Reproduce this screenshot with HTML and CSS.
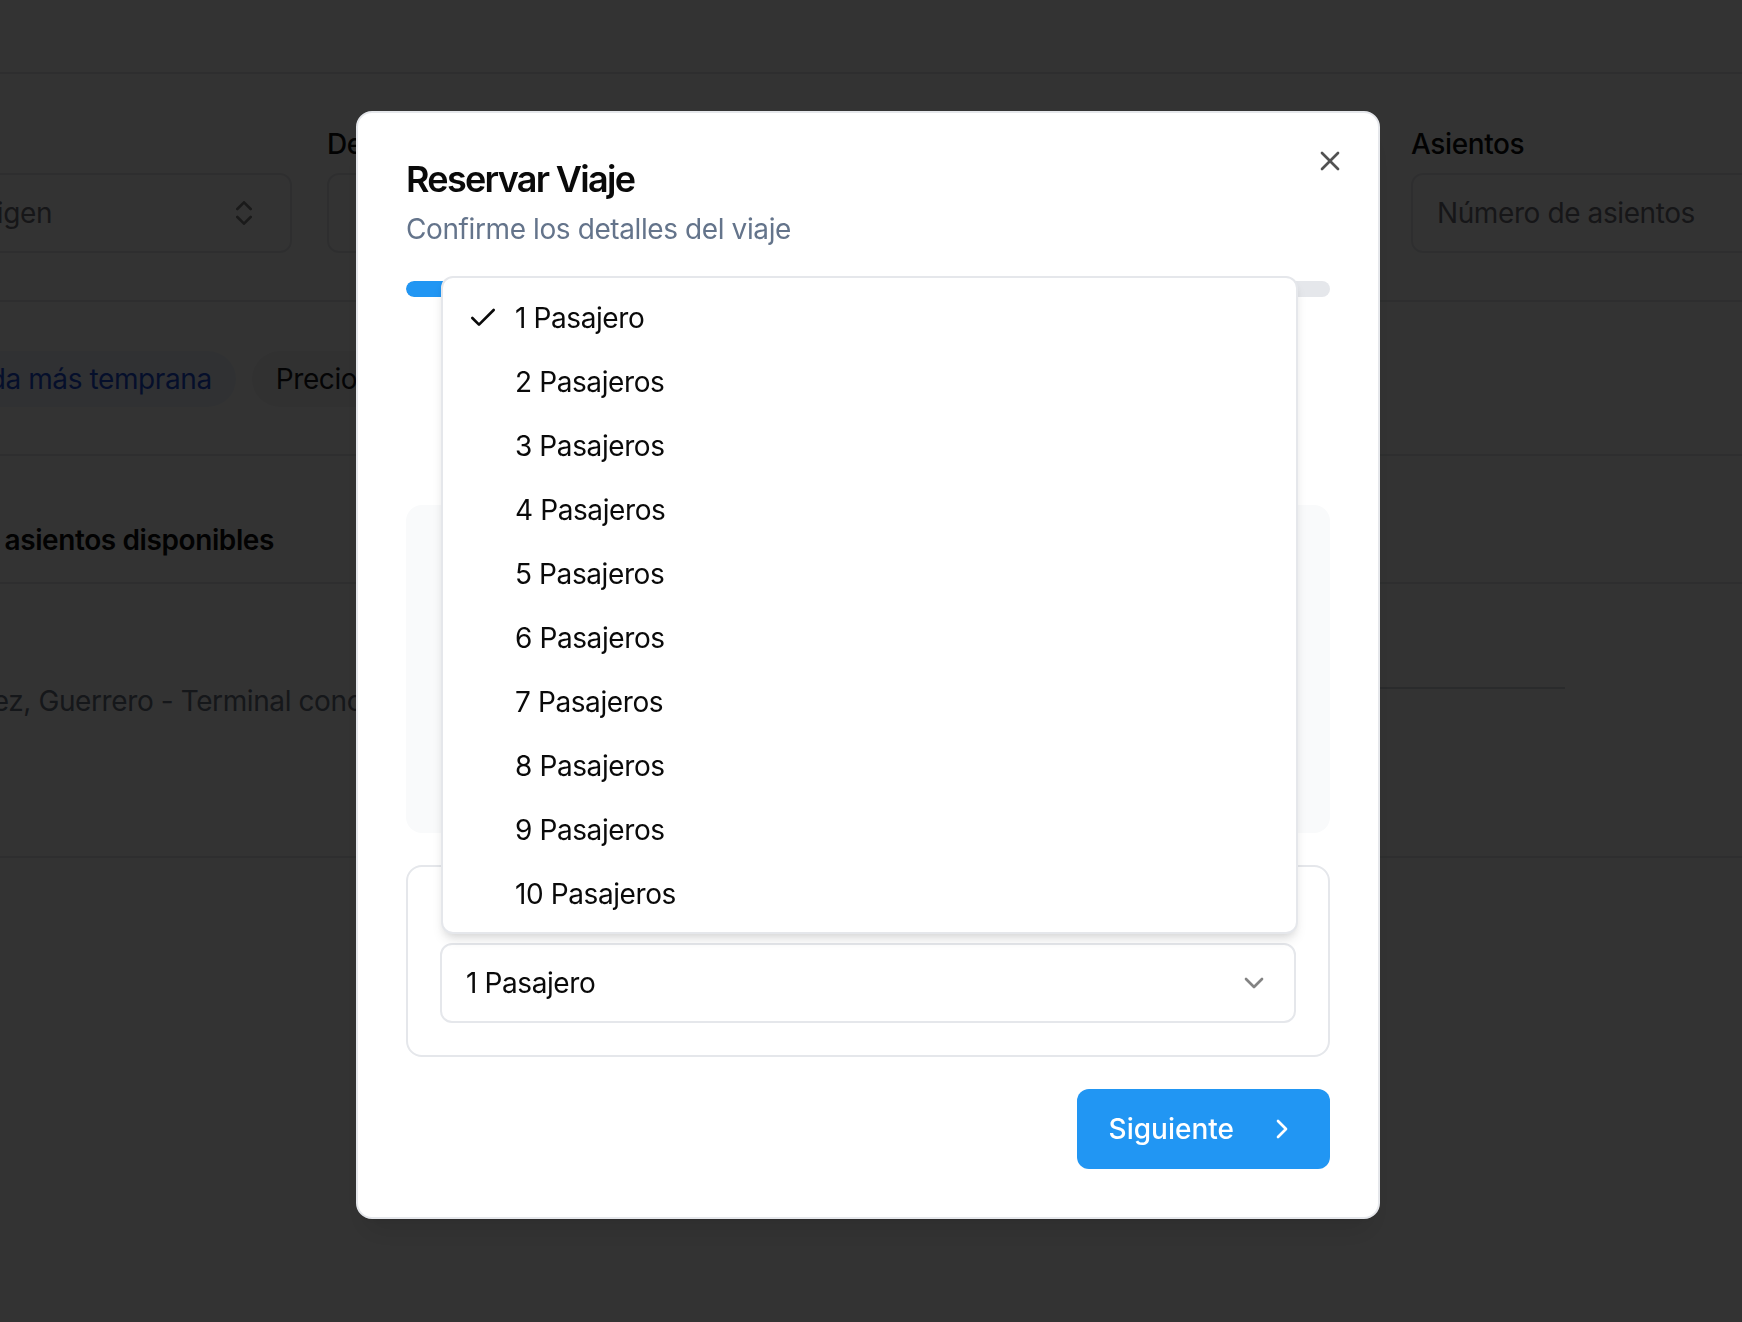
FILE: index.html
```html
<!DOCTYPE html>
<html lang="es">
<head>
<meta charset="utf-8">
<title>Reservar Viaje</title>
<link rel="stylesheet" href="styles.css">
</head>
<body>
<div class="page">
  <header class="topbar"></header>

  <section class="search">
    <div class="field">
      <label class="field-label">Origen</label>
      <div class="control control-select">
        <span class="placeholder">Seleccionar origen</span>
        <svg class="icon icon-muted" viewBox="0 0 24 24" fill="none" stroke="currentColor" stroke-width="2" stroke-linecap="round" stroke-linejoin="round"><path d="m7 15 5 5 5-5"/><path d="m7 9 5-5 5 5"/></svg>
      </div>
    </div>
    <div class="field">
      <label class="field-label">Destino</label>
      <div class="control control-select control-indent">
        <span class="placeholder">Seleccionar destino</span>
        <svg class="icon icon-muted" viewBox="0 0 24 24" fill="none" stroke="currentColor" stroke-width="2" stroke-linecap="round" stroke-linejoin="round"><path d="m7 15 5 5 5-5"/><path d="m7 9 5-5 5 5"/></svg>
      </div>
    </div>
    <div class="field">
      <label class="field-label">Fecha</label>
      <div class="control"><span class="placeholder">dd/mm/aaaa</span></div>
    </div>
    <div class="field">
      <label class="field-label">Asientos</label>
      <div class="control"><span class="placeholder">Número de asientos</span></div>
    </div>
  </section>

  <section class="filters">
    <span class="pill pill-active">Salida más temprana</span>
    <span class="pill">Precio más bajo</span>
    <span class="pill">Duración</span>
  </section>

  <section class="results-head">
    <h2 class="results-title">24 asientos disponibles</h2>
  </section>

  <section class="trip">
    <div class="trip-origin">
      <p class="trip-place">Acapulco de Juárez, Guerrero - Terminal concentradora</p>
    </div>
    <div class="trip-line"></div>
  </section>
</div>

<div class="overlay"></div>

<div class="dialog" role="dialog">
  <button class="dialog-close" aria-label="Cerrar">
    <svg class="icon" viewBox="0 0 24 24" fill="none" stroke="currentColor" stroke-width="2" stroke-linecap="round" stroke-linejoin="round"><path d="M18 6 6 18"/><path d="m6 6 12 12"/></svg>
  </button>

  <div class="dialog-header">
    <h1 class="dialog-title">Reservar Viaje</h1>
    <p class="dialog-desc">Confirme los detalles del viaje</p>
  </div>

  <div class="progress"><div class="progress-fill"></div></div>

  <div class="step-area"></div>

  <div class="summary-card"></div>

  <div class="passenger-card">
    <label class="passenger-label">Número de pasajeros</label>
    <div class="select-trigger">
      <span>1 Pasajero</span>
      <svg class="icon icon-muted" viewBox="0 0 24 24" fill="none" stroke="currentColor" stroke-width="2" stroke-linecap="round" stroke-linejoin="round"><path d="m6 9 6 6 6-6"/></svg>
    </div>
  </div>

  <div class="dialog-footer">
    <button class="btn-primary">
      <span>Siguiente</span>
      <svg class="icon" viewBox="0 0 24 24" fill="none" stroke="currentColor" stroke-width="2" stroke-linecap="round" stroke-linejoin="round"><path d="m9 18 6-6-6-6"/></svg>
    </button>
  </div>
</div>

<div class="listbox" role="listbox">
  <div class="option option-selected">
    <svg class="icon option-check" viewBox="0 0 24 24" fill="none" stroke="currentColor" stroke-width="2" stroke-linecap="round" stroke-linejoin="round"><path d="M20 6 9 17l-5-5"/></svg>
    <span>1 Pasajero</span>
  </div>
  <div class="option"><span>2 Pasajeros</span></div>
  <div class="option"><span>3 Pasajeros</span></div>
  <div class="option"><span>4 Pasajeros</span></div>
  <div class="option"><span>5 Pasajeros</span></div>
  <div class="option"><span>6 Pasajeros</span></div>
  <div class="option"><span>7 Pasajeros</span></div>
  <div class="option"><span>8 Pasajeros</span></div>
  <div class="option"><span>9 Pasajeros</span></div>
  <div class="option"><span>10 Pasajeros</span></div>
</div>
</body>
</html>
```

FILE: styles.css
```css
* {
  box-sizing: border-box;
}

html, body {
  margin: 0;
  padding: 0;
  width: 1742px;
  height: 1322px;
  overflow: hidden;
  background: #ffffff;
  font-family: Inter, "Noto Sans", "Liberation Sans", sans-serif;
  color: #0a0a0a;
  letter-spacing: -0.4px;
}

.icon {
  width: 32px;
  height: 32px;
  flex: none;
  display: block;
}

.icon-muted {
  opacity: 0.5;
}

/* ---------- background page ---------- */

.page {
  margin-left: -260px;
  width: 2400px;
}

.topbar {
  height: 74px;
  border-bottom: 2px solid #e5e7eb;
}

.search {
  display: grid;
  grid-template-columns: repeat(4, 507px);
  column-gap: 35px;
  padding: 56px 0 47px 45px;
  border-bottom: 2px solid #e5e7eb;
}

.field {
  display: flex;
  flex-direction: column;
  gap: 15px;
}

.field-label {
  font-size: 28px;
  line-height: 28px;
  font-weight: 500;
  color: #0a0a0a;
}

.control {
  height: 80px;
  border: 2px solid #e5e7eb;
  border-radius: 12px;
  padding: 0 24px;
  display: flex;
  align-items: center;
  justify-content: space-between;
  font-size: 28px;
}

.control-select {
  padding-right: 30px;
}

.control-indent {
  padding-left: 34px;
}

.placeholder {
  color: #71717a;
  white-space: nowrap;
}

.filters {
  display: flex;
  gap: 16px;
  padding: 49px 0 47px 179px;
  border-bottom: 2px solid #e5e7eb;
}

.pill {
  height: 56px;
  line-height: 56px;
  padding: 0 24px;
  border-radius: 999px;
  font-size: 28px;
  background: #f4f4f5;
  color: #18181b;
  white-space: nowrap;
}

.pill-active {
  background: #eff6ff;
  color: #1d4ed8;
}

.results-head {
  padding: 64px 0 22px 223px;
  border-bottom: 2px solid #e5e7eb;
}

.results-title {
  margin: 0;
  font-size: 28px;
  line-height: 40px;
  font-weight: 600;
  color: #0a0a0a;
}

.trip {
  display: flex;
  align-items: flex-start;
  padding: 97px 0 135px 27px;
  border-bottom: 2px solid #e5e7eb;
}

.trip-origin {
  width: 1000px;
  flex: none;
}

.trip-place {
  margin: 0;
  font-size: 28px;
  line-height: 40px;
  color: #6b7280;
  white-space: nowrap;
}

.trip-line {
  flex: none;
  width: 698px;
  height: 2px;
  margin: 6px 0 0 100px;
  background: #d1d5db;
}

/* ---------- overlay ---------- */

.overlay {
  position: fixed;
  inset: 0;
  background: rgba(0, 0, 0, 0.8);
}

/* ---------- dialog ---------- */

.dialog {
  position: fixed;
  left: 356px;
  top: 111px;
  width: 1024px;
  padding: 48px;
  border: 2px solid #e5e7eb;
  border-radius: 16px;
  background: #ffffff;
  box-shadow: 0 20px 30px -6px rgba(0, 0, 0, 0.1), 0 8px 12px -8px rgba(0, 0, 0, 0.1);
  display: flex;
  flex-direction: column;
  gap: 32px;
}

.dialog-close {
  position: absolute;
  top: 32px;
  right: 32px;
  padding: 0;
  border: 0;
  background: transparent;
  color: #0a0a0a;
  opacity: 0.7;
  cursor: pointer;
}

.dialog-header {
  display: flex;
  flex-direction: column;
  gap: 12px;
}

.dialog-title {
  margin: 0;
  font-size: 36px;
  line-height: 36px;
  font-weight: 600;
  letter-spacing: -1.7px;
  color: #0a0a0a;
}

.dialog-desc {
  margin: 0;
  font-size: 28px;
  line-height: 40px;
  color: #64748b;
}

.progress {
  height: 16px;
  border-radius: 999px;
  background: #e5e7eb;
  overflow: hidden;
}

.progress-fill {
  width: 25%;
  height: 100%;
  border-radius: 999px;
  background: #2196f3;
}

.step-area {
  height: 144px;
}

.summary-card {
  height: 328px;
  border-radius: 16px;
  background: #f9fafb;
}

.passenger-card {
  border: 2px solid #e5e7eb;
  border-radius: 16px;
  padding: 32px;
  display: flex;
  flex-direction: column;
  gap: 16px;
}

.passenger-label {
  font-size: 28px;
  line-height: 28px;
  font-weight: 500;
}

.select-trigger {
  height: 80px;
  border: 2px solid #e5e7eb;
  border-radius: 12px;
  padding: 0 24px;
  display: flex;
  align-items: center;
  justify-content: space-between;
  font-size: 28px;
  color: #0a0a0a;
}

.dialog-footer {
  display: flex;
  justify-content: flex-end;
}

.btn-primary {
  height: 80px;
  padding: 0 32px;
  border: 0;
  border-radius: 12px;
  background: #2196f3;
  color: #ffffff;
  font-family: inherit;
  font-size: 28px;
  font-weight: 500;
  letter-spacing: 0;
  display: flex;
  align-items: center;
  gap: 32px;
  cursor: pointer;
}

/* ---------- open listbox ---------- */

.listbox {
  position: fixed;
  left: 441px;
  top: 276px;
  width: 857px;
  padding: 8px 8px 6px;
  border: 2px solid #e5e7eb;
  border-radius: 12px;
  background: #ffffff;
  box-shadow: 0 8px 12px -2px rgba(0, 0, 0, 0.1), 0 4px 8px -4px rgba(0, 0, 0, 0.1);
}

.option {
  position: relative;
  height: 64px;
  padding-left: 64px;
  display: flex;
  align-items: center;
  font-size: 28px;
  color: #0a0a0a;
  border-radius: 4px;
}

.option-check {
  position: absolute;
  left: 16px;
  top: 16px;
}
```
